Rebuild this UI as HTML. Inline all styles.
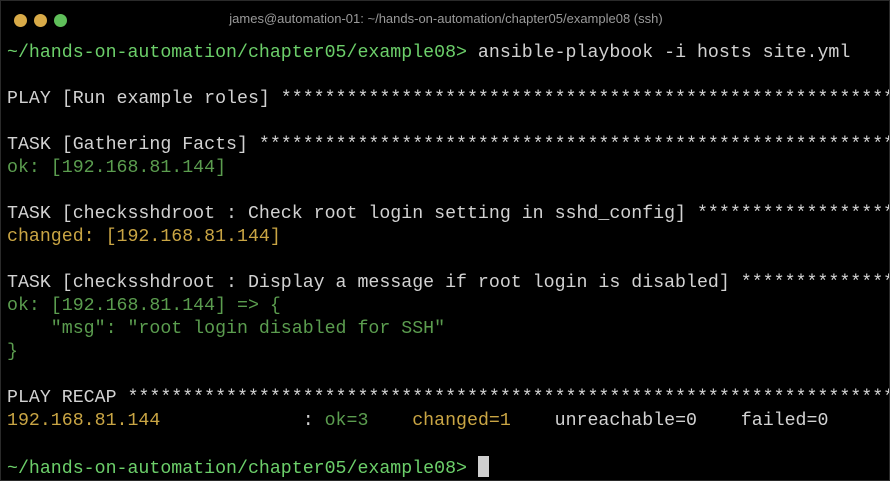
<!DOCTYPE html>
<html><head><meta charset="utf-8"><style>
html,body{margin:0;padding:0;background:#000;width:890px;height:481px;overflow:hidden}
.win{position:absolute;left:0;top:0;width:888px;height:479px;border:1px solid #2a2a2a;background:#000;overflow:hidden}
.dot{position:absolute;top:13px;width:13px;height:13px;border-radius:50%}
.title{position:absolute;top:10px;left:0;width:890px;text-align:center;font:13px "Liberation Sans",sans-serif;color:#9a9a9a}
pre{position:absolute;left:6px;top:41px;margin:0;font:18.25px/23px "Liberation Mono",monospace;color:#d2d2d2;white-space:pre}
.g{color:#6ccf6a}.o{color:#5b9d4f}.y{color:#c9a544}
.cur{display:inline-block;width:11px;height:21px;background:#cfcfcf;vertical-align:-4px}
</style></head><body><div class="win">
<div class="dot" style="left:13px;background:#d8aa48"></div>
<div class="dot" style="left:33px;background:#d8aa48"></div>
<div class="dot" style="left:53px;background:#5fbf5a"></div>
<div class="title">james@automation-01: ~/hands-on-automation/chapter05/example08 (ssh)</div>
<pre><span class="g">~/hands-on-automation/chapter05/example08&gt;</span> ansible-playbook -i hosts site.yml

PLAY [Run example roles] *****************************************************************

TASK [Gathering Facts] *******************************************************************
<span class="o">ok: [192.168.81.144]</span>

TASK [checksshdroot : Check root login setting in sshd_config] ********************
<span class="y">changed: [192.168.81.144]</span>

TASK [checksshdroot : Display a message if root login is disabled] *****************
<span class="o">ok: [192.168.81.144] =&gt; {
    "msg": "root login disabled for SSH"
}</span>

PLAY RECAP *******************************************************************************
<span class="y">192.168.81.144</span>             : <span class="o">ok=3</span>    <span class="y">changed=1</span>    unreachable=0    failed=0

<span class="g">~/hands-on-automation/chapter05/example08&gt;</span> <span class="cur"></span></pre>
</div></body></html>
